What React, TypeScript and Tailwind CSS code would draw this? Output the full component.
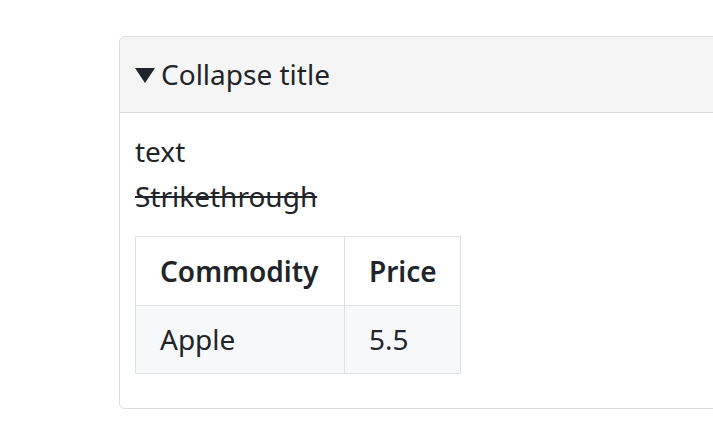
import React from 'react';

const font = { fontFamily: '"Noto Sans", "Open Sans", sans-serif' };

export default function App() {
  return (
    <div className="min-h-[441px] w-[713px] overflow-hidden bg-white text-[#212529]" style={font}>
      <div className="pl-[119px] pt-9">
        <div className="w-[700px] rounded-md border border-[#dcdcdc] bg-white">
          <div className="flex h-[76px] items-center gap-[6px] rounded-t-md border-b border-[#dcdcdc] bg-[#f5f5f5] px-[15px]">
            <svg width="20" height="15" viewBox="0 0 20 15" className="mt-[1px]">
              <polygon points="0,0 20,0 10,15" fill="#212529" />
            </svg>
            <span className="text-[28px] leading-[45px]">Collapse title</span>
          </div>
          <div className="px-[15px] pt-4 pb-[34px] text-[28px] leading-[45px]">
            <div>text</div>
            <div className="line-through">Strikethrough</div>
            <table className="mt-[17px] w-[325px] table-fixed border-collapse">
              <colgroup>
                <col className="w-[209px]" />
                <col className="w-[116px]" />
              </colgroup>
              <thead>
                <tr>
                  <th className="h-[69px] border border-[#dee2e6] pl-6 text-left font-semibold whitespace-nowrap">Commodity</th>
                  <th className="h-[69px] border border-[#dee2e6] pl-6 text-left font-semibold">Price</th>
                </tr>
              </thead>
              <tbody>
                <tr className="bg-[#f7f8f9]">
                  <td className="h-[68px] border border-[#dee2e6] pl-6">Apple</td>
                  <td className="h-[68px] border border-[#dee2e6] pl-6">5.5</td>
                </tr>
              </tbody>
            </table>
          </div>
        </div>
      </div>
    </div>
  );
}
